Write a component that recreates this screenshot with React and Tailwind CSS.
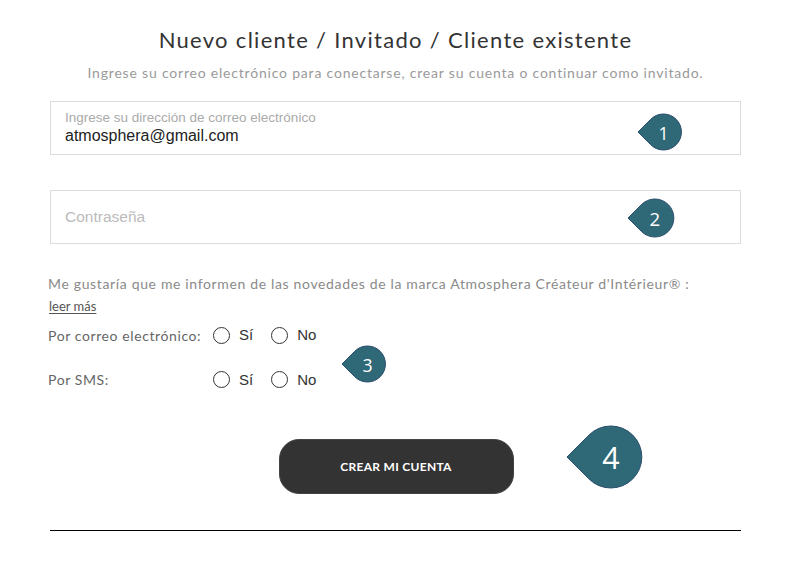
import React, { useState } from 'react';

const GEO = "font-['Lato','Liberation_Sans',sans-serif]";
const ARIAL = "font-['Liberation_Sans','Arial',sans-serif]";

// Teardrop marker pointing left, drawn around a circle of radius r
function Callout({ n, r, className }) {
  const w = r * (1 + Math.SQRT2) + 2;
  const h = r * 2 + 2;
  const cx = r * Math.SQRT2 + 1;
  const cy = r + 1;
  const t = r / Math.SQRT2;
  const d = `M ${cx - r * Math.SQRT2} ${cy} L ${cx - t} ${cy - t} A ${r} ${r} 0 1 1 ${cx - t} ${cy + t} Z`;
  return (
    <div className={`absolute ${className}`}>
      <svg width={w} height={h} viewBox={`0 0 ${w} ${h}`}>
        <path d={d} fill="#2f6877" stroke="#2b4e6e" strokeWidth="1" />
        <text
          x={cx}
          y={cy + 1}
          fill="#ffffff"
          fontFamily="Open Sans, Liberation Sans, sans-serif"
          fontSize={r * 0.98}
          textAnchor="middle"
          dominantBaseline="central"
        >
          {n}
        </text>
      </svg>
    </div>
  );
}

function Radio({ label, checked, onClick }) {
  return (
    <button type="button" onClick={onClick} className="flex items-center gap-[9px]">
      <span className="flex h-[17px] w-[17px] items-center justify-center rounded-full border-[1.3px] border-[#333]">
        {checked && <span className="h-[9px] w-[9px] rounded-full bg-[#333]" />}
      </span>
      <span className={`${ARIAL} text-[15px] text-[#333]`}>{label}</span>
    </button>
  );
}

export default function App() {
  const [mail, setMail] = useState(null);
  const [sms, setSms] = useState(null);

  return (
    <div className="relative min-h-[581px] w-[802px] bg-white">
      <div className="ml-[50px] w-[691px] pt-[26px]">
        <h1 className={`${GEO} text-center text-[22px] leading-[28px] tracking-[1.3px] text-[#333]`}>
          Nuevo cliente / Invitado / Cliente existente
        </h1>
        <p className={`${GEO} mt-[10px] text-center text-[14px] leading-[18px] tracking-[0.8px] text-[#9a9a9a]`}>
          Ingrese su correo electrónico para conectarse, crear su cuenta o continuar como invitado.
        </p>

        <div className="mt-[19px] flex h-[54px] flex-col justify-center border border-[#dcdcdc] px-[14px]">
          <span className={`${ARIAL} text-[13.5px] leading-[16px] text-[#aaa]`}>
            Ingrese su dirección de correo electrónico
          </span>
          <span className={`${ARIAL} text-[16px] leading-[20px] text-[#222]`}>atmosphera@gmail.com</span>
        </div>

        <div className="mt-[35px] flex h-[54px] items-center border border-[#dcdcdc] px-[14px]">
          <span className={`${ARIAL} text-[15.5px] text-[#bbb]`}>Contraseña</span>
        </div>

        <p className={`${GEO} -ml-[2px] mt-[31px] text-[14px] leading-[18px] tracking-[0.65px] text-[#8a8a8a]`}>
          Me gustaría que me informen de las novedades de la marca Atmosphera Créateur d'Intérieur® :
        </p>
        <a className={`${GEO} -ml-[1px] inline-block text-[13px] leading-[18px] text-[#555] underline underline-offset-2`}>
          leer más
        </a>

        <div className="-ml-[2px] mt-[7px] flex items-center">
          <span className={`${GEO} w-[165px] text-[14px] tracking-[0.6px] text-[#666]`}>Por correo electrónico:</span>
          <div className="flex gap-[18px]">
            <Radio label="Sí" checked={mail === 'si'} onClick={() => setMail('si')} />
            <Radio label="No" checked={mail === 'no'} onClick={() => setMail('no')} />
          </div>
        </div>
        <div className="-ml-[2px] mt-[22px] flex items-center">
          <span className={`${GEO} w-[165px] text-[14px] tracking-[0.6px] text-[#666]`}>Por SMS:</span>
          <div className="flex gap-[18px]">
            <Radio label="Sí" checked={sms === 'si'} onClick={() => setSms('si')} />
            <Radio label="No" checked={sms === 'no'} onClick={() => setSms('no')} />
          </div>
        </div>

        <div className="mt-[48px] flex justify-center">
          <button
            type="button"
            className={`${GEO} ml-[1px] h-[55px] w-[235px] rounded-[20px] border border-[#444] bg-[#333] text-[12px] font-bold tracking-[0.3px] text-white`}
          >
            CREAR MI CUENTA
          </button>
        </div>

        <div className="mt-[36px] h-px bg-black" />
      </div>

      <Callout n="1" r={18} className="left-[637px] top-[113px]" />
      <Callout n="2" r={19} className="left-[627px] top-[198px]" />
      <Callout n="3" r={18} className="left-[341px] top-[345px]" />
      <Callout n="4" r={31} className="left-[566px] top-[425px]" />
    </div>
  );
}
